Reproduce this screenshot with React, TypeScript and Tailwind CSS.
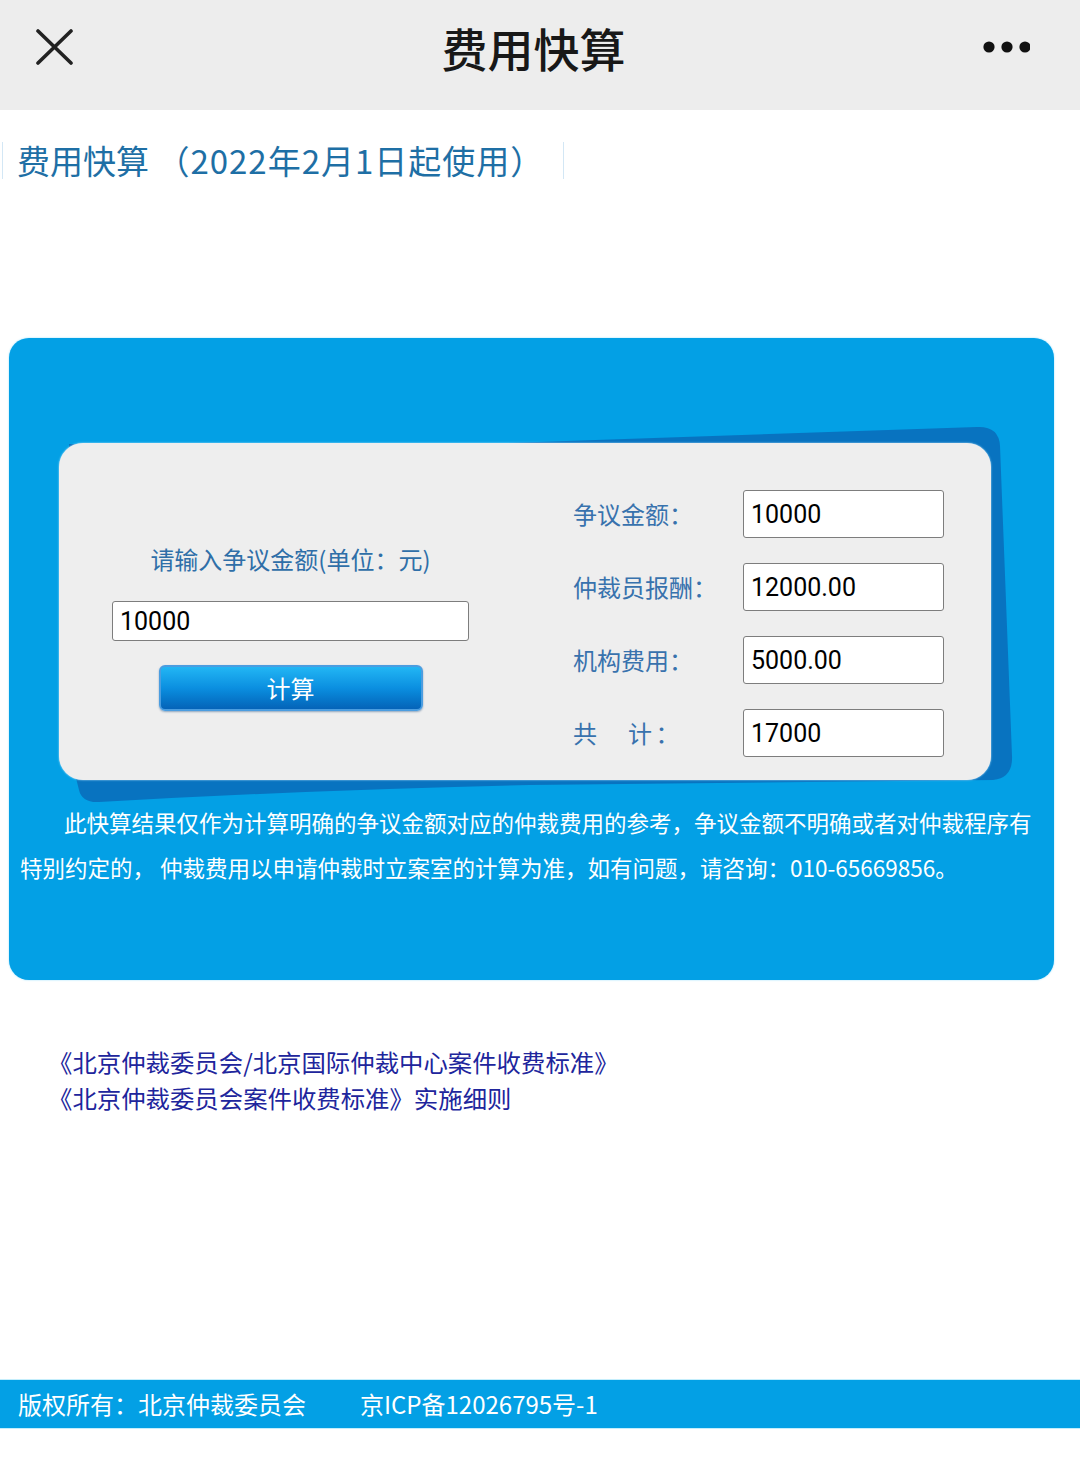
import React from "react";

const CJK = "font-['Noto_Sans_CJK_SC',sans-serif]";
const NUM = "font-['Roboto','Noto_Sans_CJK_SC',sans-serif]";

const RESULT_ROWS = [
  { label: "争议金额：", value: "10000" },
  { label: "仲裁员报酬：", value: "12000.00" },
  { label: "机构费用：", value: "5000.00" },
  { label: "共　计：", value: "17000", spaced: true },
];

function Header() {
  return (
    <header className="flex h-[110px] items-center bg-[#ededed] pb-[17px] pl-[36px] pr-[50px]">
      <svg className="h-[36px] w-[37px] shrink-0" viewBox="0 0 37 36">
        <path
          d="M2 2 L35 34 M35 2 L2 34"
          stroke="#222"
          strokeWidth="3.6"
          strokeLinecap="round"
        />
      </svg>
      <h1
        className={`flex-1 pl-[12px] text-center text-[46px] font-medium leading-none text-[#181818] ${CJK}`}
      >
        费用快算
      </h1>
      <svg className="h-[14px] w-[48px] shrink-0" viewBox="0 0 48 14">
        <circle cx="7" cy="7" r="5.6" fill="#111" />
        <circle cx="25" cy="7" r="5.6" fill="#111" />
        <circle cx="43" cy="7" r="5.6" fill="#111" />
      </svg>
    </header>
  );
}

function TextInput({ value, className }: { value: string; className: string }) {
  return (
    <input
      defaultValue={value}
      className={`rounded-[3px] border border-[#7d7d7d] bg-white pl-[7px] text-[25px] text-black outline-none ${NUM} ${className}`}
    />
  );
}

function Calculator() {
  return (
    <div className="relative ml-[9px] mt-[159px] h-[642px] w-[1045px] rounded-[20px] bg-[#03a0e5] pt-[105px] shadow-[0_0_2px_#8fdcff]">
      {/* dark blue paper behind the card */}
      <svg
        className="pointer-events-none absolute left-0 top-0 h-[642px] w-[1045px]"
        viewBox="0 0 1045 642"
      >
        <path
          d="M470 106 L968 89 Q990 88 991 108 L1003 418 Q1004 440 984 442 L520 447 Q300 452 90 464 Q73 465 70 452 L62 420 L60 106 Z"
          fill="#0873c0"
        />
      </svg>

      <div className="relative z-10 ml-[50px] flex h-[337px] w-[932px] rounded-[24px] bg-[#eeeeee] pl-[53px] pt-[47px] shadow-[0_0_2px_#bfe9ff]">
        <div className="mt-[54px] flex w-[357px] flex-col items-center">
          <p className={`text-[24px] leading-[30px] text-[#2f6fa8] ${CJK}`}>
            请输入争议金额(单位：元)
          </p>
          <TextInput value="10000" className="mt-[27px] h-[40px] w-full" />
          <button
            className={`mt-[24px] h-[46px] w-[264px] rounded-[6px] border-2 border-[#4b9de0] bg-gradient-to-b from-[#22b6f4] via-[#0b8fe0] to-[#0563b8] text-[24px] text-white shadow-[0_1px_2px_rgba(0,60,120,0.4)] ${CJK}`}
          >
            计算
          </button>
        </div>

        <div className="ml-[104px] flex flex-col gap-[25px]">
          {RESULT_ROWS.map((row) => (
            <div key={row.label} className="flex h-[48px] items-center">
              <span
                className={`w-[170px] text-[24px] text-[#3872ad] ${CJK} ${row.spaced ? "tracking-[3.5px]" : ""}`}
              >
                {row.label}
              </span>
              <TextInput value={row.value} className="h-[48px] w-[201px]" />
            </div>
          ))}
        </div>
      </div>

      <p
        className={`relative z-10 mt-[20px] whitespace-nowrap pl-[11px] indent-[44px] text-[22.5px] leading-[45px] text-white ${CJK}`}
      >
        此快算结果仅作为计算明确的争议金额对应的仲裁费用的参考，争议金额不明确或者对仲裁程序有
        <br />
        特别约定的， 仲裁费用以申请仲裁时立案室的计算为准，如有问题，请咨询：010-65669856。
      </p>
    </div>
  );
}

export default function App() {
  return (
    <div className={`min-h-[1457px] w-[1080px] bg-white ${CJK}`}>
      <Header />

      <div className="ml-[2px] mt-[32px] inline-flex h-[37px] items-center border-x border-[#d3e7f5] pl-[14px] pr-[19px]">
        <span className="text-[33px] leading-none text-[#1e6fa5]">
          费用快算 <span className="tracking-[1px]">（2022年2月1日起使用）</span>
        </span>
      </div>

      <Calculator />

      <div className="ml-[48px] mt-[64px] flex flex-col text-[24.4px] leading-[36px] text-[#20259c]">
        <a href="#">《北京仲裁委员会/北京国际仲裁中心案件收费标准》</a>
        <a href="#">《北京仲裁委员会案件收费标准》实施细则</a>
      </div>

      <footer className="mt-[263px] flex h-[50px] items-center border-y border-[#c4eefc] bg-[#03a0e5] pl-[18px] text-[24px] text-white">
        <span>版权所有：北京仲裁委员会</span>
        <span className="ml-[54px]">京ICP备12026795号-1</span>
      </footer>
    </div>
  );
}
